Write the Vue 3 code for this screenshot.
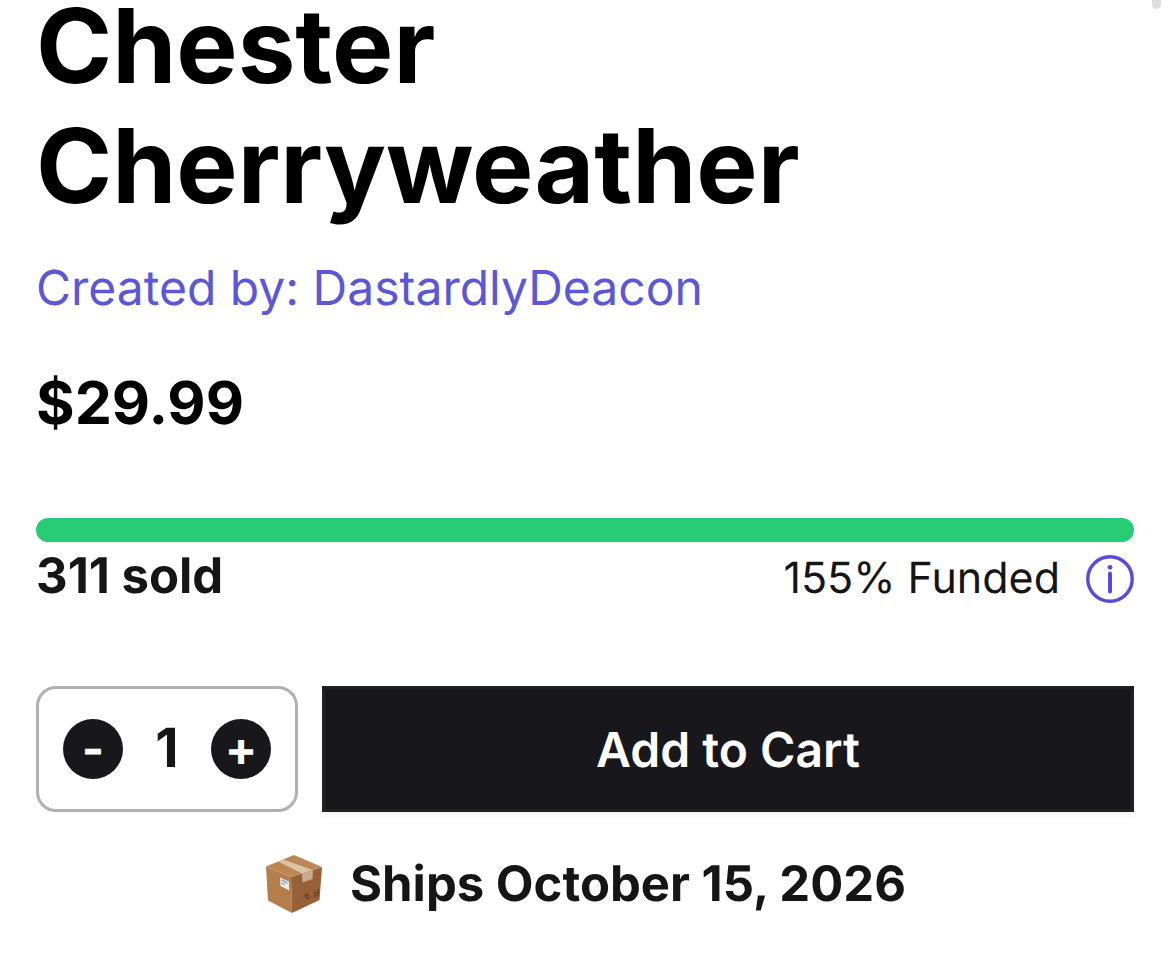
<script setup>
import { ref } from 'vue'
const qty = ref(1)
</script>

<template>
  <main class="product">
    <h1>Chester Cherryweather</h1>
    <a class="creator" href="#">Created by: DastardlyDeacon</a>
    <p class="price">$29.99</p>
    <section class="funding">
      <div class="bar"></div>
      <div class="stats">
        <strong class="sold">311 sold</strong>
        <div class="funded">
          <span>155% Funded</span>
          <button class="info" type="button" aria-label="Funding information">
            <svg viewBox="0 0 48 48"><circle cx="24" cy="24" r="22.2" /><path d="M24 18.5v18" stroke-width="4" stroke-linecap="round" /><circle class="dot" cx="24" cy="12.3" r="2.4" /></svg>
          </button>
        </div>
      </div>
    </section>
    <div class="purchase">
      <div class="stepper">
        <button type="button" aria-label="Decrease quantity" @click="qty = Math.max(1, qty - 1)">-</button>
        <span class="qty">{{ qty }}</span>
        <button type="button" aria-label="Increase quantity" @click="qty++">+</button>
      </div>
      <button class="cart" type="button">Add to Cart</button>
    </div>
    <p class="ships">
      <svg class="box" viewBox="0 0 60 60">
        <path d="M2 12.5 27 23 28 59 4 46.5z" fill="#b47d4c" />
        <path d="M27 23 58 13 55.5 46 28 59z" fill="#966038" />
        <path d="M2 12.5 30 1 58 13 27 23z" fill="#bd8655" />
        <path d="M14 7.5 19 5.5 49 16 38 19.5z" fill="#dcc2a5" />
        <path d="M38 19.5 49 16 48.5 25 38.5 28.5z" fill="#cba98b" />
        <path d="M16 23.5 25 27.5 25.2 36.5 16.5 32z" fill="#e9edf0" />
        <path d="M17.5 26 23.5 29M17.7 29 21 30.7" stroke="#8fa9bd" stroke-width="1.5" />
        <path d="M40 43l2.5-3 3 1M43 40v5l3-2M51 37v7M54 35v8M51 40l3-1" fill="none" stroke="#684225" stroke-width="1.2" />
      </svg>
      <span>Ships October 15, 2026</span>
    </p>
    <div class="thumb"></div>
  </main>
</template>

<style>
body { margin: 0; background: #fff; }
</style>

<style scoped>
.product { position: relative; padding: 0 36px; font-family: Inter, "Liberation Sans", sans-serif; color: #151515; text-rendering: geometricPrecision; display: flow-root; }
button { font-family: inherit; border: 0; padding: 0; cursor: pointer; text-rendering: inherit; }
h1 { max-width: 1000px; margin: -14px 0 0; font-size: 103px; line-height: 120px; font-weight: 700; color: #000; }
.creator { display: block; margin-top: 34px; font-size: 48px; line-height: 56px; color: #5b57d6; text-decoration: none; }
.price { margin: 48px 0 0; font-size: 59px; line-height: 80px; font-weight: 700; color: #000; }
.funding { margin-top: 74px; }
.bar { height: 24px; border-radius: 12px; background: #27cc74; }
.stats { display: flex; justify-content: space-between; align-items: center; margin-top: 8px; }
.sold { font-size: 49px; line-height: 52px; padding-bottom: 6px; font-weight: 700; }
.funded { display: flex; align-items: center; gap: 26px; font-size: 43px; line-height: 56px; }
.funded span { padding-bottom: 2px; }
.info { width: 48px; height: 48px; background: none; }
.info svg { display: block; fill: none; stroke: #564bdc; stroke-width: 3.4; }
.info .dot { fill: #564bdc; stroke: none; }
.purchase { display: flex; gap: 24px; margin-top: 78px; height: 126px; }
.stepper { box-sizing: border-box; flex: 0 0 262px; display: flex; align-items: center; justify-content: space-between; padding: 0 24px; border: 3px solid #b0b0b0; border-radius: 20px; }
.stepper button { width: 60px; height: 60px; border-radius: 50%; background: #18171c; color: #fff; font-size: 48px; line-height: 60px; font-weight: 700; }
.qty { font-size: 54px; line-height: 60px; font-weight: 700; }
.cart { flex: 1; background: #18171c; border: 3px solid #202022; box-shadow: 0 3px 6px #0000000d; color: #fff; font-size: 48px; font-weight: 600; }
.ships { display: flex; align-items: center; justify-content: center; gap: 26px; margin: 42px 0 0; font-size: 49px; line-height: 60px; font-weight: 700; }
.box { width: 60px; height: 60px; }
.thumb { position: absolute; top: 0; right: 9px; width: 9px; height: 9px; border-radius: 0 0 5px 5px; background: #ddd; }
</style>
